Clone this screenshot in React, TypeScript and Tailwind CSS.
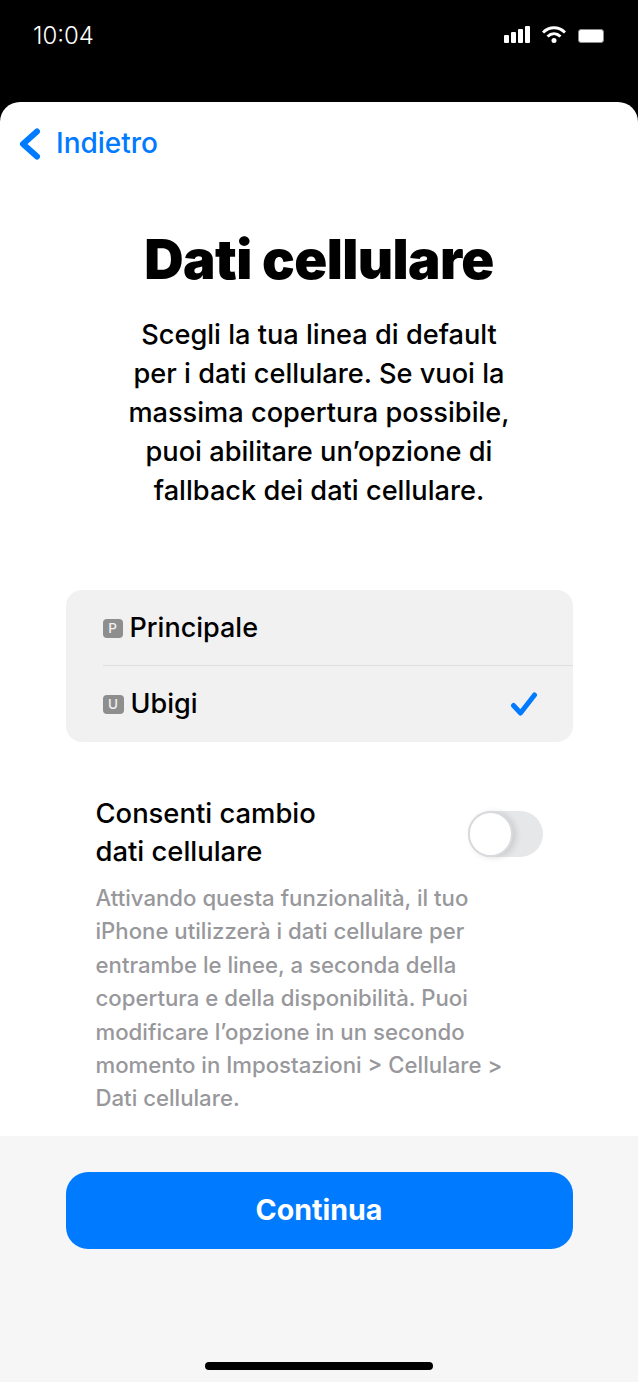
const SimBadge = ({ letter, wide }: { letter: string; wide?: boolean }) => (
  <span
    className={`flex h-[19px] items-center justify-center rounded-[4px] bg-[#8e8e8e] text-[13.5px] font-medium text-[#f1f1f2] ${
      wide ? "w-[21px]" : "w-[20px]"
    }`}
  >
    {letter}
  </span>
);

const StatusBar = () => (
  <div className="flex h-[102px] items-start justify-between bg-black pl-[33px] pr-[34px] pt-[20px] text-white">
    <span className="text-[24px] font-light leading-[32px]">10:04</span>
    <div className="flex items-end gap-[12px] pt-[6px]">
      <svg width="26" height="17" viewBox="0 0 26 17" fill="white">
        <rect x="0" y="9" width="5" height="8" rx="1" />
        <rect x="7" y="6" width="5" height="11" rx="1" />
        <rect x="14" y="3" width="5" height="14" rx="1" />
        <rect x="21" y="0" width="5" height="17" rx="1" />
      </svg>
      <svg width="24" height="17" viewBox="0 0 24 17" fill="none" stroke="white" strokeWidth="3">
        <path d="M1 6.5C7.5 0.2 16.5 0.2 23 6.5" />
        <path d="M5.5 10.5C9.5 6.8 14.5 6.8 18.5 10.5" />
        <circle cx="12" cy="14.5" r="2.5" fill="white" stroke="none" />
      </svg>
      <div className="h-[14px] w-[26px] rounded-[3px] border border-[#8a8a8a] bg-white" />
    </div>
  </div>
);

export default function App() {
  return (
    <div className="flex h-[1382px] w-[638px] flex-col overflow-hidden bg-black font-['Inter',sans-serif]">
      <StatusBar />
      <div className="flex flex-1 flex-col overflow-hidden rounded-t-[20px] bg-white">
        <div className="flex h-[1034px] flex-col">
          <div className="flex items-center gap-[15px] pl-[19px] pt-[25px]">
            <svg width="22" height="32" viewBox="0 0 22 32" fill="none" stroke="#007aff" strokeWidth="6" strokeLinecap="round" strokeLinejoin="round">
              <path d="M18 3.5L4 16L18 28.5" />
            </svg>
            <span className="-mt-[1px] text-[28px] font-medium leading-[34px] text-[#007aff]">Indietro</span>
          </div>

          <h1 className="mt-[67px] text-center text-[54.5px] font-black leading-[64px] tracking-[-0.6px] text-black">
            Dati cellulare
          </h1>

          <p className="mt-[24px] text-center text-[27.2px] font-medium leading-[39px] text-black">
            Scegli la tua linea di default
            <br />
            per i dati cellulare. Se vuoi la
            <br />
            massima copertura possibile,
            <br />
            puoi abilitare un’opzione di
            <br />
            fallback dei dati cellulare.
          </p>

          <div className="mx-[65.5px] mt-[80px] rounded-[16px] bg-[#f1f1f2] pl-[37px]">
            <div className="flex h-[76px] items-center gap-[7px] border-b border-[#dedee0] pt-[2px] text-[27px] font-medium text-black">
              <SimBadge letter="P" />
              <span>Principale</span>
            </div>
            <div className="flex h-[76px] items-center justify-between pr-[35px] text-[27px] font-medium text-black">
              <div className="flex items-center gap-[7px]">
                <SimBadge letter="U" wide />
                <span>Ubigi</span>
              </div>
              <svg width="28" height="25" viewBox="0 0 28 25" fill="none" stroke="#007aff" strokeWidth="5" strokeLinecap="round" strokeLinejoin="round">
                <path d="M3.5 13.5L10.5 21L24.5 3" />
              </svg>
            </div>
          </div>

          <div className="mt-[52px] flex items-start justify-between pl-[95.5px] pr-[95px]">
            <div className="text-[27.4px] font-medium leading-[38px] text-black">
              Consenti cambio
              <br />
              dati cellulare
            </div>
            <div className="mt-[17px] h-[46px] w-[75px] rounded-full bg-[#e6e7e9]">
              <div className="h-[46px] w-[45px] rounded-full border-2 border-[#d8dadd] bg-white shadow-[3px_1px_6px_rgba(0,0,0,0.12)]" />
            </div>
          </div>

          <p className="ml-[95.5px] mt-[11px] w-[425px] text-[22.2px] font-medium leading-[33.4px] text-[#98989c]">
            Attivando questa funzionalità, il tuo
            <br />
            iPhone utilizzerà i dati cellulare per
            <br />
            entrambe le linee, a seconda della
            <br />
            copertura e della disponibilità. Puoi
            <br />
            modificare l’opzione in un secondo
            <br />
            momento in Impostazioni &gt; Cellulare &gt;
            <br />
            Dati cellulare.
          </p>
        </div>

        <div className="flex flex-1 flex-col items-center bg-[#f6f6f6] pt-[36px]">
          <button className="h-[77px] w-[507px] rounded-[22px] bg-[#007aff] text-[28.6px] font-bold text-white">
            Continua
          </button>
          <div className="mt-[113px] h-[8px] w-[228px] rounded-full bg-black" />
        </div>
      </div>
    </div>
  );
}
